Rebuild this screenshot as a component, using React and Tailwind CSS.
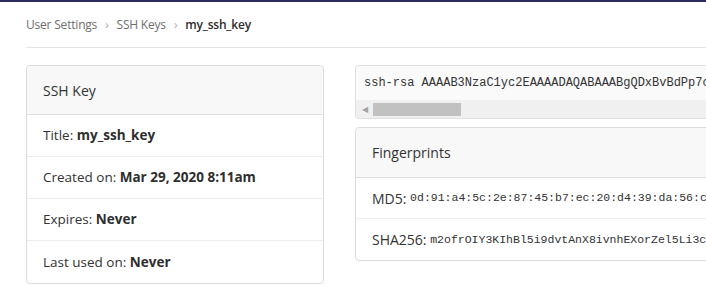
export default function App() {
  const rows = [
    ["Title:", "my_ssh_key"],
    ["Created on:", "Mar 29, 2020 8:11am"],
    ["Expires:", "Never"],
    ["Last used on:", "Never"],
  ];
  const mono = "font-['Liberation_Mono','DejaVu_Sans_Mono',monospace]";

  return (
    <div className="w-[706px] h-[286px] overflow-hidden bg-white border-t-2 border-[#29295e] text-[#333] font-['Open_Sans','Noto_Sans',sans-serif]">
      <div className="pl-[26px] w-[1000px]">
        {/* breadcrumb */}
        <div className="flex items-center h-[46px] text-[12px] tracking-[-0.2px] border-b border-[#e5e5e5]">
          <span className="text-[#6e6e6e]">User Settings</span>
          <span className="mx-[8px] text-[#aaa] text-[12px]">&rsaquo;</span>
          <span className="text-[#6e6e6e]">SSH Keys</span>
          <span className="mx-[8px] text-[#aaa] text-[12px]">&rsaquo;</span>
          <span className="font-semibold text-[#2e2e2e]">my_ssh_key</span>
        </div>

        <div className="flex gap-[31px] mt-[17px]">
          {/* left card */}
          <div className="w-[298px] shrink-0 border border-[#dcdcdc] rounded-[4px] text-[13.5px]">
            <div className="h-[49px] flex items-center px-[16px] bg-[#f8f8f8] border-b border-[#e0e0e0] rounded-t-[4px] text-[14px]">
              SSH Key
            </div>
            {rows.map(([k, v], i) => (
              <div
                key={k}
                className={`h-[42px] flex items-center px-[16px] ${i < rows.length - 1 ? "border-b border-[#ececec]" : ""}`}
              >
                {k}&nbsp;<span className="font-bold text-[#2e2e2e]">{v}</span>
              </div>
            ))}
          </div>

          {/* right column */}
          <div className="flex-1 flex flex-col gap-[8px]">
            <div className="border border-[#e0e0e0] rounded-[3px] bg-[#fafafa]">
              <div className={`h-[34px] flex items-center px-[8px] whitespace-nowrap ${mono} text-[12px] text-[#333]`}>
                ssh-rsa AAAAB3NzaC1yc2EAAAADAQABAAABgQDxBvBdPp7cRkN4zQ
              </div>
              <div className="h-[18px] flex items-center bg-[#f0f0f0]">
                <span className="w-[17px] text-center text-[8px] text-[#a3a3a3]">&#9664;</span>
                <div className="h-[13px] w-[88px] bg-[#c1c1c1]" />
              </div>
            </div>

            <div className="border border-[#dcdcdc] rounded-[4px] text-[14px]">
              <div className="h-[50px] flex items-center px-[16px] bg-[#f8f8f8] border-b border-[#e0e0e0] rounded-t-[4px]">
                Fingerprints
              </div>
              <div className="h-[41px] flex items-center px-[16px] border-b border-[#ececec] whitespace-nowrap">
                MD5:&nbsp;
                <span className={`${mono} text-[11.5px]`}>
                  0d:91:a4:5c:2e:87:45:b7:ec:20:d4:39:da:56:c8:1f
                </span>
              </div>
              <div className="h-[41px] flex items-center px-[16px] whitespace-nowrap">
                SHA256:&nbsp;
                <span className={`${mono} text-[11.5px]`}>
                  m2ofrOIY3KIhBl5i9dvtAnX8ivnhEXorZel5Li3cQwE
                </span>
              </div>
            </div>
          </div>
        </div>
      </div>
    </div>
  );
}
